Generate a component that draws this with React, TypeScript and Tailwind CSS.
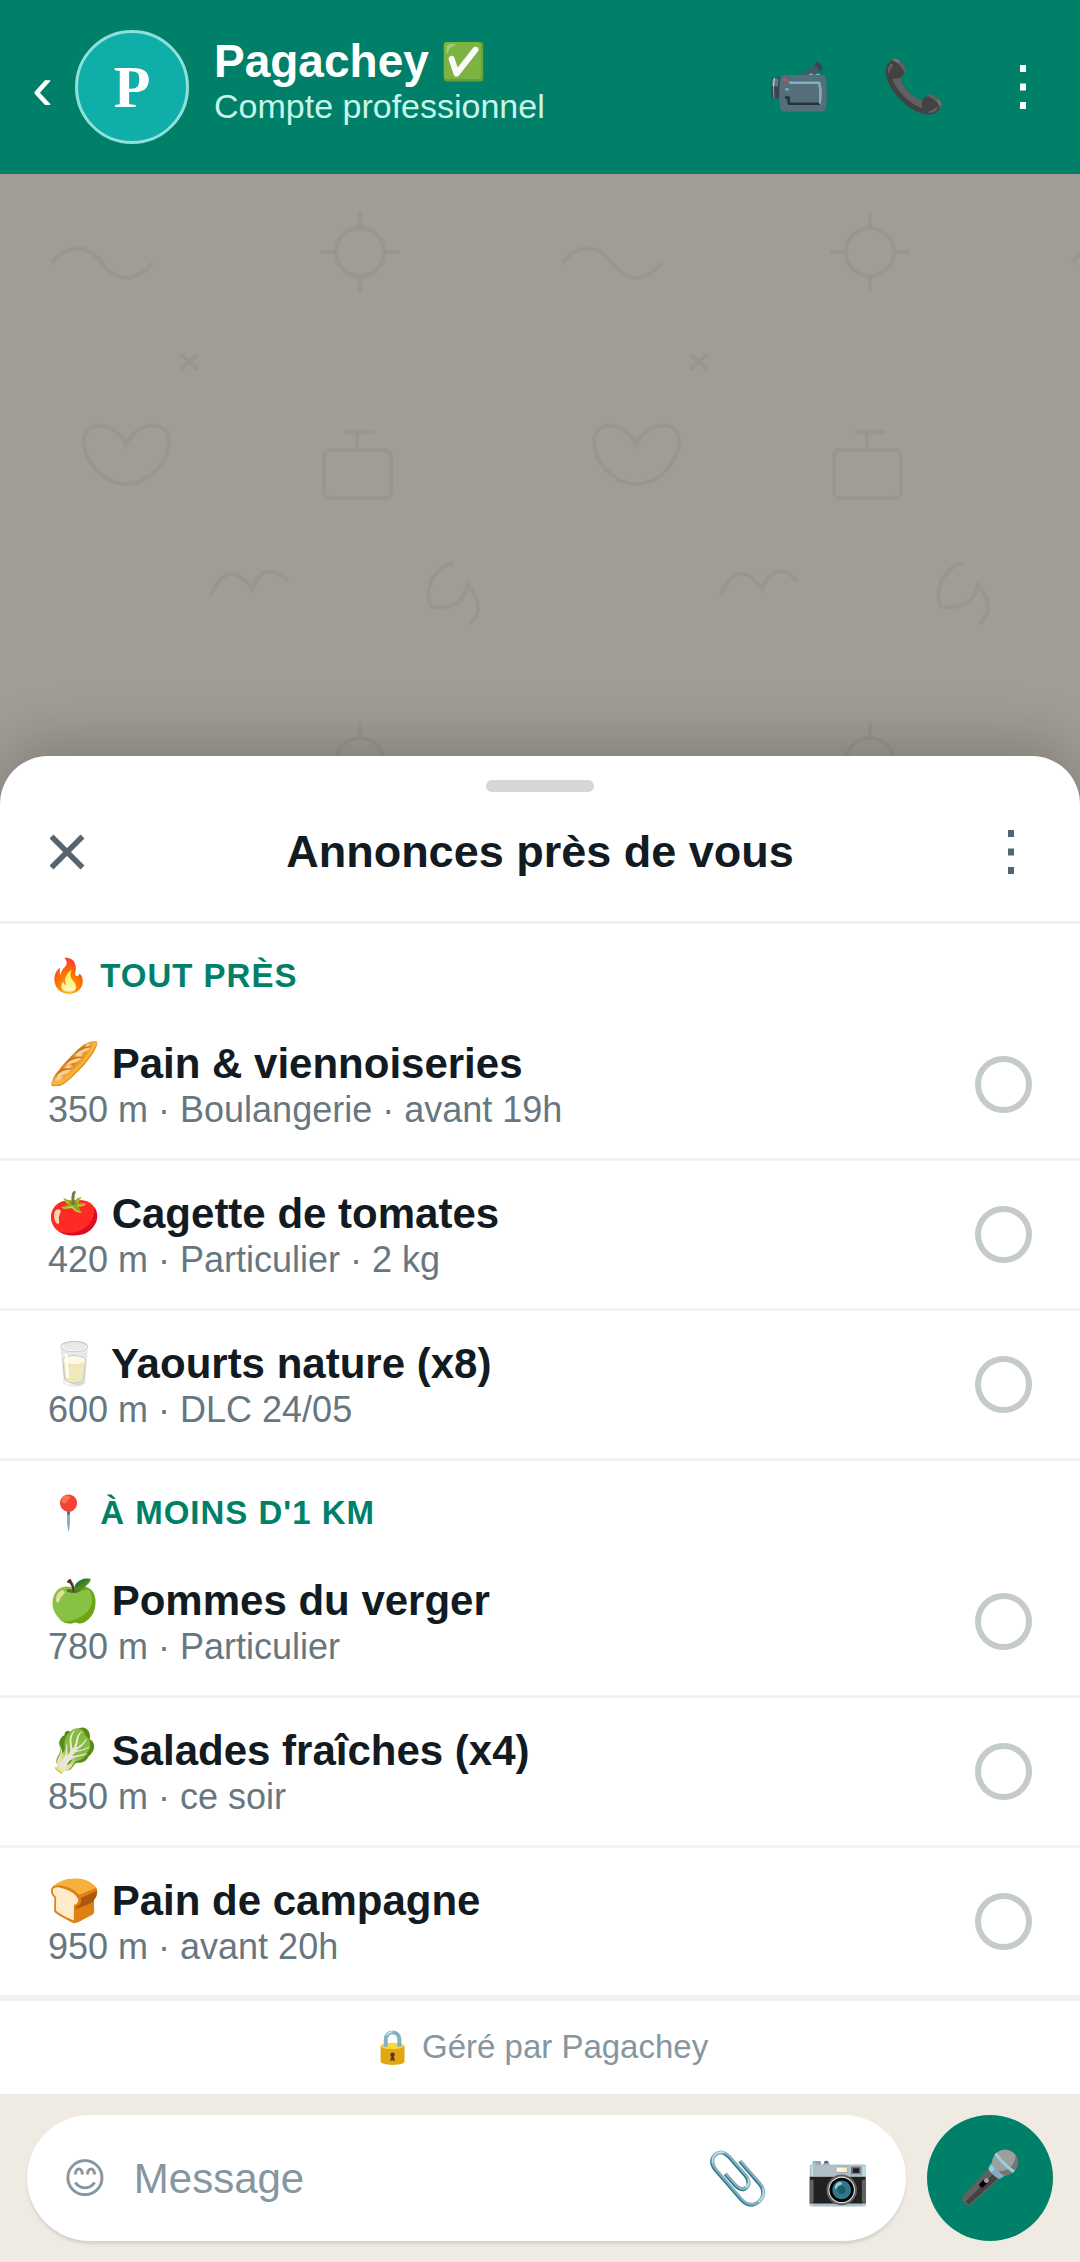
import React, { useState } from 'react';

type Listing = {
  id: string;
  emoji: string;
  title: string;
  details: string;
};

type Section = {
  emoji: string;
  label: string;
  listings: Listing[];
};

const sections: Section[] = [
  {
    emoji: '🔥',
    label: 'TOUT PRÈS',
    listings: [
      { id: 'pain', emoji: '🥖', title: 'Pain & viennoiseries', details: '350 m · Boulangerie · avant 19h' },
      { id: 'tomates', emoji: '🍅', title: 'Cagette de tomates', details: '420 m · Particulier · 2 kg' },
      { id: 'yaourts', emoji: '🥛', title: 'Yaourts nature (x8)', details: '600 m · DLC 24/05' },
    ],
  },
  {
    emoji: '📍',
    label: "À MOINS D'1 KM",
    listings: [
      { id: 'pommes', emoji: '🍏', title: 'Pommes du verger', details: '780 m · Particulier' },
      { id: 'salades', emoji: '🥬', title: 'Salades fraîches (x4)', details: '850 m · ce soir' },
      { id: 'campagne', emoji: '🍞', title: 'Pain de campagne', details: '950 m · avant 20h' },
    ],
  },
];

const DotsIcon: React.FC = () => (
  <svg className="mx-auto h-[54px] w-3" viewBox="0 0 12 54" fill="currentColor" aria-hidden="true">
    <rect x="3" y="5" width="6" height="7" />
    <rect x="3" y="23.5" width="6" height="7" />
    <rect x="3" y="42" width="6" height="7" />
  </svg>
);

const CloseIcon: React.FC = () => (
  <svg className="size-[38px]" viewBox="0 0 38 38" fill="none" stroke="currentColor" strokeWidth="5.5" aria-hidden="true">
    <path d="M3.5 3.5l31 31M34.5 3.5l-31 31" />
  </svg>
);

const Header: React.FC = () => (
  <header className="flex h-[174px] shrink-0 items-center bg-[#008069] px-8 text-white">
    <button aria-label="Retour" className="w-[19px] text-[63px] leading-[66px]">‹</button>
    <div className="ml-6 flex size-[114px] shrink-0 items-center justify-center rounded-full border-3 border-[#8ee0da] bg-[#0faea9] font-['Liberation_Serif',serif] text-[60px] font-bold leading-none">
      P
    </div>
    <div className="ml-[25px] min-w-0 flex-1 pb-3">
      <h1 className="flex items-center gap-3 text-[46px] font-bold leading-[51px]">
        Pagachey <span className="text-[36px] leading-none">✅</span>
      </h1>
      <p className="text-[34px] leading-[39px] text-[#c8f5ea]">Compte professionnel</p>
    </div>
    <div className="flex items-center gap-[51px] text-[51px] leading-[60px]">
      <button aria-label="Appel vidéo">📹</button>
      <button aria-label="Appel vocal">📞</button>
      <button aria-label="Menu" className="w-[51px]">
        <DotsIcon />
      </button>
    </div>
  </header>
);

const Wallpaper: React.FC = () => (
  <svg className="absolute inset-0 size-full" aria-hidden="true">
    <defs>
      <pattern id="doodles" width="510" height="510" patternUnits="userSpaceOnUse">
        <g fill="none" stroke="#98938b" strokeWidth="4" strokeOpacity="0.8">
          <path d="M52 89Q78 59 102 89T152 89" />
          <circle cx="360" cy="78" r="24" />
          <path d="M360 54V38M360 102v16M336 78h-16M384 78h16" />
          <path d="M180 180l18 16M198 180l-18 16" />
          <path d="M126 270C114 246 84 246 84 267C84 288 104 310 126 310C148 310 169 288 169 267C169 246 138 246 126 270Z" />
          <rect x="324" y="276" width="67" height="48" rx="6" />
          <path d="M357 276V258M344 258h31" />
          <path d="M210 422Q228 382 252 415Q264 384 288 407" />
          <path d="M454 389C430 394 424 420 431 433C448 434 462 434 468 411C480 425 482 440 470 449" />
        </g>
      </pattern>
    </defs>
    <rect width="100%" height="100%" fill="url(#doodles)" />
  </svg>
);

type RowProps = {
  listing: Listing;
  checked: boolean;
  onSelect: () => void;
};

const ListingRow: React.FC<RowProps> = ({ listing, checked, onSelect }) => (
  <label className="flex h-[150px] items-center justify-between border-b-3 border-[#f2f3f4] px-12">
    <span>
      <span className="block text-[42px] font-bold leading-[50px] text-[#111b21]">
        {listing.emoji} {listing.title}
      </span>
      <span className="block text-[36px] leading-[42px] text-[#667781]">{listing.details}</span>
    </span>
    <input
      type="radio"
      name="annonce"
      checked={checked}
      onChange={onSelect}
      className="size-[57px] shrink-0 appearance-none rounded-full border-6 border-[#c5cacd] checked:border-[18px] checked:border-[#008069]"
    />
  </label>
);

const Sheet: React.FC = () => {
  const [selected, setSelected] = useState('');

  return (
    <section className="relative shrink-0 rounded-t-[48px] bg-white pt-6 shadow-[0_-12px_60px_rgba(0,0,0,0.2)]">
      <div className="mx-auto h-3 w-[108px] rounded-full bg-[#d6d6d6]" />
      <div className="flex h-[132px] items-center justify-between border-b-3 border-[#eff0f1] px-12 pb-[10px] text-[#54656f]">
        <button aria-label="Fermer" className="w-[42px]">
          <CloseIcon />
        </button>
        <h2 className="text-[45px] font-bold leading-[54px] text-[#111b21]">Annonces près de vous</h2>
        <button aria-label="Options" className="w-[42px]">
          <DotsIcon />
        </button>
      </div>
      {sections.map((section) => (
        <div key={section.label}>
          <h3 className="h-[87px] px-12 pt-8 text-[33px] font-bold leading-[39px] tracking-[1px] text-[#008069]">
            {section.emoji} {section.label}
          </h3>
          {section.listings.map((listing) => (
            <ListingRow
              key={listing.id}
              listing={listing}
              checked={selected === listing.id}
              onSelect={() => setSelected(listing.id)}
            />
          ))}
        </div>
      ))}
      <p className="h-24 border-t-3 border-[#eff0f1] pt-[25px] text-center text-[33px] leading-[42px] text-[#8696a0]">
        🔒 Géré par Pagachey
      </p>
    </section>
  );
};

const MessageBar: React.FC = () => {
  const [message, setMessage] = useState('');

  return (
    <form
      onSubmit={(e) => e.preventDefault()}
      className="relative flex shrink-0 items-center gap-[21px] bg-[#efeae2] px-[27px] py-[21px]"
    >
      <div className="flex h-[126px] min-w-0 flex-1 items-center rounded-full bg-white px-9 pt-[2px] shadow-[0_3px_3px_rgba(0,0,0,0.1)]">
        <button type="button" aria-label="Emoji" className="font-['DejaVu_Sans',sans-serif] text-[42px] leading-[48px] text-[#8696a0]">
          {'😊\uFE0E'}
        </button>
        <input
          aria-label="Message"
          placeholder="Message"
          value={message}
          onChange={(e) => setMessage(e.target.value)}
          className="ml-[27px] min-w-0 flex-1 text-[42px] leading-[48px] text-[#111b21] outline-none placeholder:text-[#8696a0]"
        />
        <div className="flex gap-9 text-[51px] leading-[60px]">
          <button type="button" aria-label="Joindre">📎</button>
          <button type="button" aria-label="Photo">📷</button>
        </div>
      </div>
      <button
        type="button"
        aria-label="Message vocal"
        className="flex size-[126px] shrink-0 items-center justify-center rounded-full bg-[#008069] text-[51px] leading-[60px]"
      >
        🎤
      </button>
    </form>
  );
};

const App: React.FC = () => {
  return (
    <div className="flex min-h-screen flex-col font-['Liberation_Sans',Arial,sans-serif]">
      <Header />
      <main className="flex flex-1 flex-col bg-[#a19c94]">
        <div className="relative min-h-[582px] flex-1">
          <Wallpaper />
        </div>
        <Sheet />
      </main>
      <MessageBar />
    </div>
  );
};

export default App;
